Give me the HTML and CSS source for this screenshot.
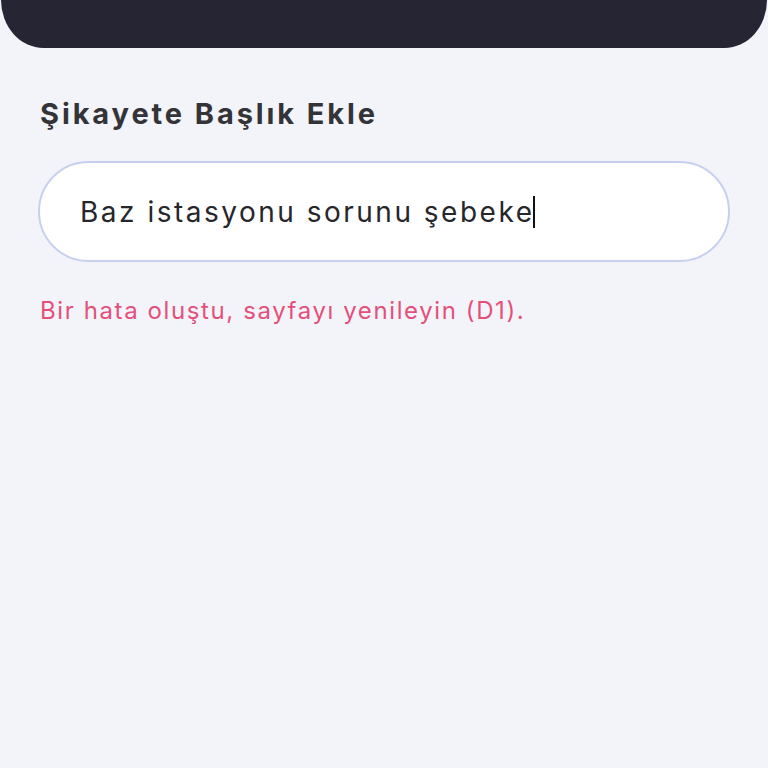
FILE: index.html
```
<!DOCTYPE html>
<html lang="tr">
<head>
<meta charset="utf-8">
<link rel="stylesheet" href="styles.css">
</head>
<body>
<header class="topbar"></header>
<main class="content">
  <h1 class="title">Şikayete Başlık Ekle</h1>
  <div class="field">
    <span class="field-text">Baz istasyonu sorunu şebeke</span><span class="caret"></span>
  </div>
  <p class="error">Bir hata oluştu, sayfayı yenileyin (D1).</p>
</main>
</body>
</html>
```
FILE: styles.css
```
* { box-sizing: border-box; }
html, body {
  margin: 0;
  padding: 0;
  background: #f3f4f9;
  width: 768px;
  height: 768px;
  overflow: hidden;
  font-family: Inter, "Noto Sans", sans-serif;
}
.topbar {
  height: 48px;
  margin: 0 1px;
  background: #262533;
  border-radius: 0 0 46px 46px / 0 0 52px 52px;
}
.content {
  padding: 0 38px;
}
.title {
  margin: 48px 0 0 2px;
  font-size: 29px;
  line-height: 36px;
  font-weight: 700;
  color: #333338;
  letter-spacing: 2.9px;
}
.field {
  margin-top: 29px;
  height: 101px;
  border: 2px solid #c8d0f0;
  border-radius: 51px;
  background: #ffffff;
  display: flex;
  align-items: center;
  padding-left: 40px;
}
.field-text {
  font-size: 28px;
  color: #26262b;
  letter-spacing: 2.5px;
  font-weight: 400;
}
.caret {
  display: inline-block;
  width: 2px;
  height: 32px;
  background: #111;
  margin-left: -1px;
}
.error {
  margin: 34px 0 0 2px;
  font-size: 24px;
  line-height: 30px;
  color: #e4507a;
  letter-spacing: 1.6px;
}
```
